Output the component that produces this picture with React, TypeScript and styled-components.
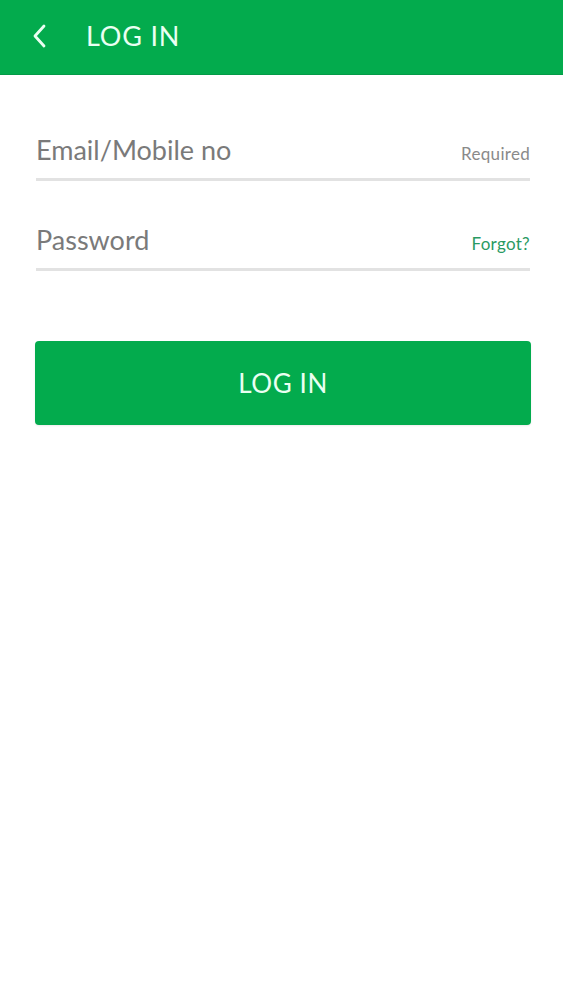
import { ReactElement } from 'react'
import styled, { createGlobalStyle } from 'styled-components'

const GlobalStyle = createGlobalStyle`
  html, body {
    margin: 0;
    padding: 0;
    background: #ffffff;
    font-family: Lato, 'Open Sans', sans-serif;
  }
`

const Page = styled.div`
  display: flex;
  flex-direction: column;
  width: 563px;
  min-height: 1000px;
  background: #ffffff;
`

const Header = styled.header`
  display: flex;
  align-items: center;
  height: 75px;
  padding-left: 30px;
  padding-bottom: 3px;
  box-sizing: border-box;
  background: #03ab4d;
  border-bottom: 1px solid #049a47;
`

const BackButton = styled.button`
  display: flex;
  align-items: center;
  justify-content: center;
  width: 20px;
  height: 30px;
  padding: 0;
  margin-right: 36px;
  border: none;
  background: transparent;
  cursor: pointer;
`

const Title = styled.h1`
  margin: 0;
  color: #eafff2;
  font-size: 27px;
  font-weight: 400;
  letter-spacing: 0.8px;
`

const Form = styled.form`
  display: flex;
  flex-direction: column;
  padding: 58px 33px 0 36px;
`

const Field = styled.div`
  display: flex;
  align-items: baseline;
  justify-content: space-between;
  height: 48px;
  margin-bottom: 42px;
  border-bottom: 3px solid #e2e2e2;
  box-sizing: border-box;
`

const Input = styled.input`
  flex: 1;
  min-width: 0;
  padding: 0;
  border: none;
  outline: none;
  background: transparent;
  font-family: Lato, 'Open Sans', sans-serif;
  font-size: 27px;
  color: #555;

  &::placeholder {
    color: #7a7a7a;
  }
`

const Hint = styled.span<{ $link?: boolean }>`
  font-size: 17px;
  letter-spacing: 0.3px;
  color: ${p => (p.$link ? '#2a9a63' : '#8a8a8a')};
  cursor: ${p => (p.$link ? 'pointer' : 'default')};
`

const Submit = styled.button`
  height: 84px;
  margin: 28px -1px 0 -1px;
  border: none;
  border-radius: 4px;
  background: #03ab4d;
  color: #eafff2;
  font-family: Lato, 'Open Sans', sans-serif;
  font-size: 26px;
  letter-spacing: 0.6px;
  cursor: pointer;
  box-shadow: 0 1px 2px rgba(0, 0, 0, 0.08);
`

export default function App(): ReactElement {
  return (
    <Page>
      <GlobalStyle />
      <Header>
        <BackButton aria-label="Back">
          <svg width="18" height="26" viewBox="0 0 18 26">
            <path
              d="M13 3 L4 13 L13 23"
              fill="none"
              stroke="#eafff2"
              strokeWidth="2.8"
              strokeLinecap="round"
              strokeLinejoin="round"
            />
          </svg>
        </BackButton>
        <Title>LOG IN</Title>
      </Header>

      <Form onSubmit={e => e.preventDefault()}>
        <Field>
          <Input placeholder="Email/Mobile no" />
          <Hint>Required</Hint>
        </Field>
        <Field>
          <Input type="password" placeholder="Password" />
          <Hint $link>Forgot?</Hint>
        </Field>
        <Submit type="submit">LOG IN</Submit>
      </Form>
    </Page>
  )
}
